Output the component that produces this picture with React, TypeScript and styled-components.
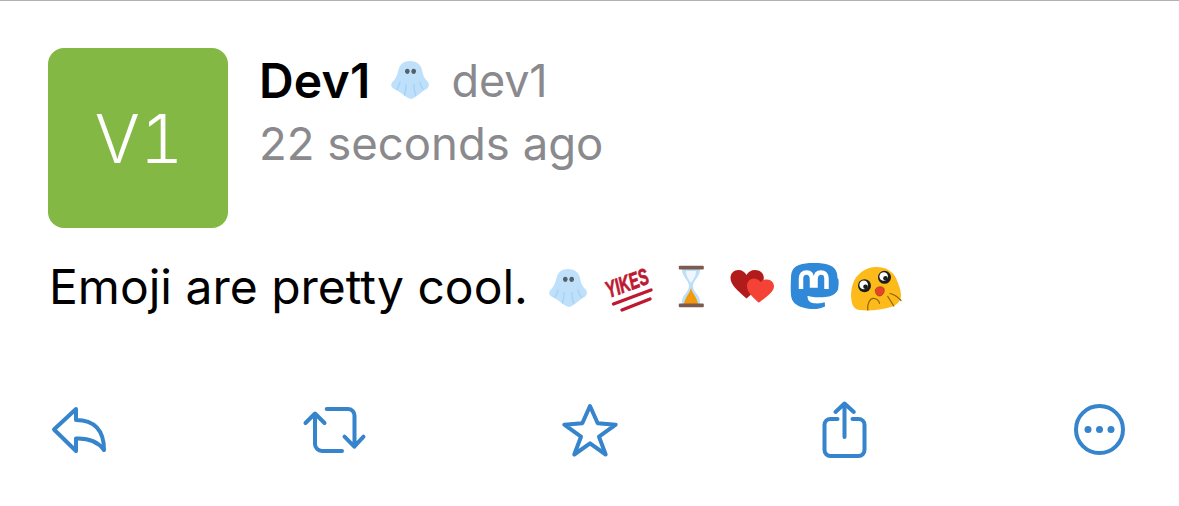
import React from "react";
import styled, { createGlobalStyle } from "styled-components";

const Global = createGlobalStyle`
  html, body { margin: 0; padding: 0; background: #fff; }
  body { font-family: Inter, "Liberation Sans", sans-serif; color: #000; }
`;

const Page = styled.main`
  box-sizing: border-box;
  width: 1179px;
  height: 506px;
  border-top: 1px solid #b2b2b2;
  padding: 47px 48px 0;
  overflow: hidden;
`;
const Header = styled.header`
  display: flex;
  gap: 31px;
`;
const Avatar = styled.div`
  box-sizing: border-box;
  width: 180px;
  height: 180px;
  padding-left: 2px;
  border-radius: 16px;
  background: #84b845;
  color: #fff;
  display: flex;
  align-items: center;
  justify-content: center;
  font: 300 67px Inter, sans-serif;
  font-variant-numeric: tabular-nums;
`;
const Meta = styled.div`
  display: flex;
  flex-direction: column;
  padding-top: 4px;
`;
const NameRow = styled.div`
  display: flex;
  align-items: center;
  height: 56px;
`;
const Name = styled.span`
  font-size: 48px;
  font-weight: 600;
  letter-spacing: 0.2px;
`;
const Handle = styled.span`
  font-size: 45px;
  color: #8a8a8e;
  letter-spacing: -0.1px;
`;
const Time = styled.div`
  font-size: 45.5px;
  line-height: 56px;
  margin-top: 8px;
  color: #8a8a8e;
`;
const NameEmoji = styled.span`
  width: 48px;
  height: 48px;
  margin: 0 17px 0 16px;
  flex: none;
  display: block;
`;
const Body = styled.div`
  display: flex;
  align-items: center;
  height: 48px;
  margin-top: 36px;
  margin-left: 1px;
`;
const BodyText = styled.span`
  font-size: 48px;
  margin: 0 16px 3px 0;
`;
const Emojis = styled.div`
  display: flex;
  gap: 13.5px;
`;
const EmojiSlot = styled.span`
  width: 48px;
  height: 48px;
  display: block;
  flex: none;
`;
const Actions = styled.nav`
  display: flex;
  justify-content: space-between;
  margin-top: 88px;
`;
const ActionSlot = styled.button`
  width: 60px;
  height: 60px;
  padding: 0;
  border: 0;
  background: none;
  display: block;
`;
const Art = styled.svg`
  display: block;
  width: 100%;
  height: 100%;
  overflow: visible;
`;
const ActionArt = styled(Art).attrs({
  fill: "none",
  stroke: "#3684cc",
  strokeWidth: 4,
  strokeLinecap: "round",
  strokeLinejoin: "round",
  viewBox: "0 0 60 60",
})``;

const Ghost = () => (
  <Art viewBox="0 0 48 48">
    <path
      d="M24 5C31 5 35 9 36 14 37 20 39 23 42 26 44.500 29 42 33 38 34.500 34 37 30 42 25 43 20 42 16 37 11 34.500 7 33 3.500 30 6 26.500 9.500 23 11 20 12.500 14 13.500 9 17 5 24 5Z"
      fill="#bfe0fb"
    />
    <path d="M14 26c-.5 3-1.500 5-3 7M20 29c0 4-.5 7-1.500 10M28 29c0 4 .5 7 1.500 10M34 26c.5 3 1.500 5 3 7" fill="none" stroke="#a5d3f6" strokeWidth="1.500" strokeLinecap="round" />
    <ellipse cx="21.300" cy="15.300" rx="2.300" ry="2.600" fill="#555f68" />
    <ellipse cx="27.700" cy="15.300" rx="2.300" ry="2.600" fill="#555f68" />
  </Art>
);

const Yikes = () => (
  <Art viewBox="0 0 48 48">
    <text
      transform="translate(4 34) rotate(-20)"
      fontFamily="'Liberation Sans', sans-serif"
      fontStyle="italic"
      fontWeight="700"
      fontSize="23"
      fill="#be1931"
      stroke="#be1931"
      strokeWidth="0.8"
      textLength="44"
      lengthAdjust="spacingAndGlyphs"
    >
      YIKES
    </text>
    <path d="M8.500 40 46 26M17 46 45 35" fill="none" stroke="#be1931" strokeWidth="3.400" strokeLinecap="round" />
  </Art>
);

const Hourglass = () => (
  <Art viewBox="0 0 48 48">
    <path d="M15 3h18v3c0 7-7 10-7 16s7 9 7 15v3H15v-3c0-6 7-9 7-15S15 13 15 6z" fill="#bddff8" />
    <path d="M19 7c0 6 4 10 5 12 1-2 5-6 5-12z" fill="#eef7fe" />
    <path d="M24 24c-1 5-6 9-7 16h14c-1-7-6-11-7-16z" fill="#f29a0c" />
    <rect x="11.800" y="1.700" width="25" height="3.800" rx="1" fill="#7c5b4f" />
    <rect x="11.800" y="39.500" width="25" height="3.800" rx="1" fill="#7c5b4f" />
  </Art>
);

const Hearts = () => (
  <Art viewBox="0 0 48 48">
    <path d="M18.500 34.500C10 27 2.500 21 2.500 14 2.500 9 6 6 10.500 6 14 6 17 8 18.500 11 20 8 23 6 27 6 32 6 36 9.500 35.800 14 35.500 21 27 27 18.500 34.500Z" fill="#b11b1b" />
    <path d="M30.800 38.700C25 33 19 29 19 22 19 17.500 22 14.500 26 14.500 28.500 14.500 31 16 32.500 18 34 16.500 36.500 15.500 39 15.500 43 15.500 46 18.500 46 22.500 46 28 37 34 30.800 38.700Z" fill="#f44336" />
  </Art>
);

const Mastodon = () => (
  <Art viewBox="0 0 48 48">
    <g transform="translate(0 -2)">
      <path d="M47.500 16C47.500 8 43.500 4.500 39 3 35 1.500 30 1 25 1h-2C18 1 13 1.500 9 3 4.500 4.500 1 8 1 16c-.3 5.500-.4 11.500 0 17 .6 7 5 10.500 12 12.500 6 1.700 12 2 16 1 3-.6 6-2 6-2l-.2-4.200s-3 1-7.500 1.100c-4.400-.1-9-.5-9.700-5.900a11 11 0 0 1-.1-1.500s4.300 1 9.800 1.300c3.300.2 6.500-.2 9.600-.6 6-.7 10.600-4.400 11.200-7.800 1-5.300.4-9.400.4-9.400z" fill="#2f89d8" />
      <path d="M36.500 27V16.500c0-3.700-2-6-5.500-6-3.700 0-5.500 2.400-5.500 7v6h-3.500v-6c0-4.600-1.800-7-5.500-7-3.500 0-5.500 2.300-5.500 6V27" fill="none" stroke="#fff" strokeWidth="4.500" />
    </g>
  </Art>
);

const BlobEye = ({ cx, cy }: { cx: number; cy: number }) => (
  <g>
    <circle cx={cx} cy={cy} r="6.500" fill="#1c1c1c" />
    <circle cx={cx - 0.8} cy={cy - 0.8} r="4.300" fill="#fff" />
    <circle cx={cx + 1} cy={cy + 1} r="2.300" fill="#1c1c1c" />
  </g>
);

const Blob = () => (
  <Art viewBox="0 0 48 48">
    <path d="M.3 35C-.5 28 1 21 3.500 16 7 9.500 14 4.500 22 3.300 32 2 41 6 45 14 47.500 20 50 26 50 31 50 37 46 41 40 43 30 46 18 47 9 46 3 45.500 .8 41 .3 35Z" fill="#fdbb1b" />
    <BlobEye cx={13.500} cy={21.700} />
    <BlobEye cx={33.500} cy={13.300} />
    <path d="M24.500 25c2.500-3 7-3 8.500-.500 1 3-1 7-4 7.500-3 .5-5.500-3.500-4.500-7z" fill="#e8432a" stroke="#8a3a10" strokeWidth=".6" />
    <path d="M16.800 46c-.8-6 2-11.700 5.500-11.700 3.500 0 5.700 2.700 6.200 5M36.800 32.500c2 3 4 6.500 6 9.500M39 29.500c4 1 8 3.500 11 7" fill="none" stroke="#8d6200" strokeWidth="1.200" strokeLinecap="round" />
  </Art>
);

export default function App() {
  return (
    <Page>
      <Global />
      <Header>
        <Avatar>V1</Avatar>
        <Meta>
          <NameRow>
            <Name>Dev1</Name>
            <NameEmoji><Ghost /></NameEmoji>
            <Handle>dev1</Handle>
          </NameRow>
          <Time>22 seconds ago</Time>
        </Meta>
      </Header>
      <Body>
        <BodyText>Emoji are pretty cool.</BodyText>
        <Emojis>
          <EmojiSlot><Ghost /></EmojiSlot>
          <EmojiSlot><Yikes /></EmojiSlot>
          <EmojiSlot><Hourglass /></EmojiSlot>
          <EmojiSlot><Hearts /></EmojiSlot>
          <EmojiSlot><Mastodon /></EmojiSlot>
          <EmojiSlot><Blob /></EmojiSlot>
        </Emojis>
      </Body>
      <Actions>
        <ActionSlot aria-label="Reply">
          <ActionArt><path d="M28 9 6 29.500 28 51V38.500C42 38 51 43 56 50 56 30 46 20 28 20Z" /></ActionArt>
        </ActionSlot>
        <ActionSlot aria-label="Boost">
          <ActionArt>
            <path d="M1.500 23 11 13.500 20.500 23M11 14V44a7 7 0 0 0 7 7H38M22.700 9H44a6.500 6.500 0 0 1 6.500 6.500V46.500M40.500 36.700 50.300 46.700 59.500 36.700" />
          </ActionArt>
        </ActionSlot>
        <ActionSlot aria-label="Favourite">
          <ActionArt><path d="M30 6 37.700 23.300 55.700 24.700 39 36.700 45.700 54.500 30 43.300 14.300 54.500 21 36.700 4.300 24.700 22.300 23.300Z" /></ActionArt>
        </ActionSlot>
        <ActionSlot aria-label="Share">
          <ActionArt>
            <path d="M22.500 19H15.500a6 6 0 0 0-6 6V50a6 6 0 0 0 6 6H43.500a6 6 0 0 0 6-6V25a6 6 0 0 0-6-6H37.500M20.500 12 29.500 3.500 38.800 12M29.500 4V37" />
          </ActionArt>
        </ActionSlot>
        <ActionSlot aria-label="More">
          <ActionArt>
            <circle cx="28.500" cy="29.500" r="23.500" />
            <g fill="#3684cc" stroke="none">
              <circle cx="17" cy="29.500" r="3.500" />
              <circle cx="28.500" cy="29.500" r="3.500" />
              <circle cx="40" cy="29.500" r="3.500" />
            </g>
          </ActionArt>
        </ActionSlot>
      </Actions>
    </Page>
  );
}
